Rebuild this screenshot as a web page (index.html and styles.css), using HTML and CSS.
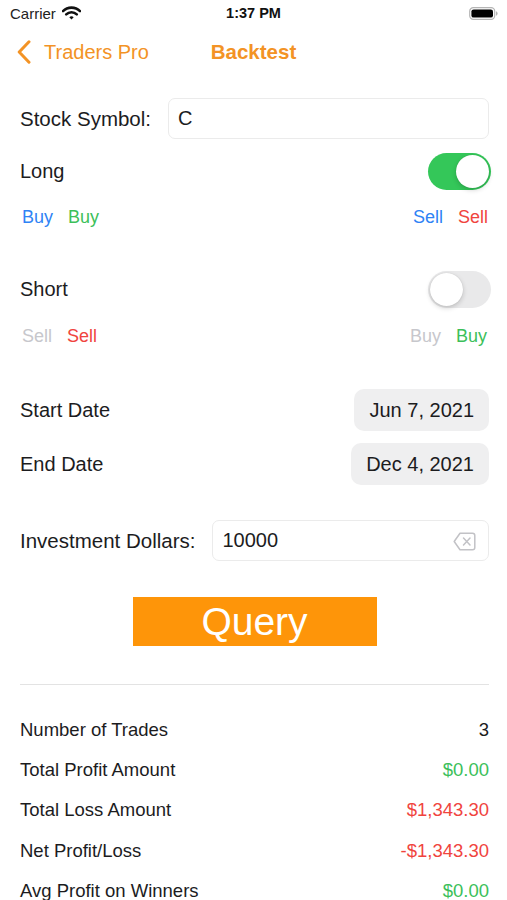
FILE: index.html
```html
<!DOCTYPE html>
<html lang="en">
<head>
    <meta charset="UTF-8">
    <title>Backtest</title>

    <link rel="stylesheet" href="styles.css">
</head>
<body>
<div class="status-bar">
    <div class="status-left">
        <span>Carrier</span>
        <svg class="wifi" width="19" height="14" viewBox="0 0 19 14">
            <path d="M1 5.2 A12 12 0 0 1 18 5.2" fill="none" stroke="#111" stroke-width="2.6" stroke-linecap="round"/>
            <path d="M4.2 8.4 A7.5 7.5 0 0 1 14.8 8.4" fill="none" stroke="#111" stroke-width="2.6" stroke-linecap="round"/>
            <path d="M7.3 11.3 L9.5 13.4 L11.7 11.3 A3.1 3.1 0 0 0 7.3 11.3 Z" fill="#111"/>
        </svg>
    </div>
    <div class="status-time">1:37 PM</div>
    <div class="status-right">
        <svg width="29" height="13" viewBox="0 0 29 13">
            <rect x="0.7" y="0.7" width="25" height="11.6" rx="3.6" fill="none" stroke="#b5b5b5" stroke-width="1.2"/>
            <rect x="2.4" y="2.4" width="21.6" height="8.2" rx="2.2" fill="#000"/>
            <path d="M27 4.3 Q28.6 4.6 28.6 6.5 Q28.6 8.4 27 8.7 Z" fill="#b5b5b5"/>
        </svg>
    </div>
</div>

<header class="nav-bar">
    <a href="#" class="back">
        <svg width="14" height="24" viewBox="0 0 14 24">
            <path d="M12 1.8 L2.2 12 L12 22.2" fill="none" stroke="#f39325" stroke-width="3" stroke-linecap="round" stroke-linejoin="round"/>
        </svg>
        <span>Traders Pro</span>
    </a>
    <h1 class="nav-title">Backtest</h1>
    <div></div>
</header>

<main class="form">
    <div class="field-row symbol-row">
        <label class="field-label">Stock Symbol:</label>
        <div class="text-box">C</div>
    </div>

    <div class="toggle-row long-row">
        <span>Long</span>
        <div class="switch on"><div class="knob"></div></div>
    </div>
    <div class="action-row first-actions">
        <div class="pair">
            <span class="blue">Buy</span>
            <span class="green">Buy</span>
        </div>
        <div class="pair">
            <span class="blue">Sell</span>
            <span class="red">Sell</span>
        </div>
    </div>

    <div class="toggle-row short-row">
        <span>Short</span>
        <div class="switch"><div class="knob"></div></div>
    </div>
    <div class="action-row second-actions">
        <div class="pair">
            <span class="gray">Sell</span>
            <span class="red">Sell</span>
        </div>
        <div class="pair">
            <span class="gray">Buy</span>
            <span class="green">Buy</span>
        </div>
    </div>

    <div class="date-row start-row">
        <span>Start Date</span>
        <div class="date-pill">Jun 7, 2021</div>
    </div>
    <div class="date-row end-row">
        <span>End Date</span>
        <div class="date-pill">Dec 4, 2021</div>
    </div>

    <div class="field-row invest-row">
        <label class="field-label">Investment Dollars:</label>
        <div class="text-box">
            <span>10000</span>
            <svg class="clear" width="23" height="19" viewBox="0 0 23 19">
                <path d="M7 1.2 H19.5 Q21.8 1.2 21.8 3.5 V15.5 Q21.8 17.8 19.5 17.8 H7 L1.2 9.5 Z" fill="none" stroke="#c2c2c6" stroke-width="1.5" stroke-linejoin="round"/>
                <path d="M10.5 6 L17 13 M17 6 L10.5 13" stroke="#c2c2c6" stroke-width="1.5" stroke-linecap="round"/>
            </svg>
        </div>
    </div>

    <button class="query">Query</button>

    <hr class="divider">

    <section class="stats">
        <div class="stat"><span>Number of Trades</span><span>3</span></div>
        <div class="stat"><span>Total Profit Amount</span><span class="green">$0.00</span></div>
        <div class="stat"><span>Total Loss Amount</span><span class="red">$1,343.30</span></div>
        <div class="stat"><span>Net Profit/Loss</span><span class="red">-$1,343.30</span></div>
        <div class="stat"><span>Avg Profit on Winners</span><span class="green">$0.00</span></div>
    </section>
</main>
</body>
</html>
```

FILE: styles.css
```css
body {
    margin: 0;
    width: 507px;
    height: 900px;
    overflow: hidden;
    background-color: white;
    color: #1c1c1e;
    font-family: "Liberation Sans", Arial, sans-serif;
}

/* status bar */

.status-bar {
    height: 26px;
    display: grid;
    grid-template-columns: 1fr auto 1fr;
    align-items: center;
    font-size: 15px;
}

.status-left {
    display: flex;
    align-items: center;
    gap: 6px;
    padding-left: 10px;
    color: #222;
}

.status-time {
    font-weight: bold;
    font-size: 14.5px;
    color: #111;
}

.status-right {
    display: flex;
    justify-content: flex-end;
    padding-right: 9px;
    padding-top: 1px;
}

/* navigation */

.nav-bar {
    height: 52px;
    display: grid;
    grid-template-columns: 1fr auto 1fr;
    align-items: center;
}

.back {
    display: flex;
    align-items: center;
    gap: 13px;
    padding-left: 17px;
    color: #f39325;
    text-decoration: none;
    font-size: 20px;
}

.nav-title {
    margin: 0;
    font-size: 20.5px;
    font-weight: bold;
    color: #f39325;
}

/* form */

.form {
    padding: 0 18px 0 20px;
    font-size: 20px;
}

.field-row {
    display: flex;
    align-items: center;
    height: 41px;
}

.field-label {
    margin-right: 17px;
    white-space: nowrap;
    font-size: 20.5px;
}

.symbol-row {
    margin-top: 20px;
}

.invest-row {
    margin-top: 35px;
}

.text-box {
    flex: 1;
    height: 39px;
    display: flex;
    align-items: center;
    justify-content: space-between;
    padding: 0 12px 0 9px;
    border: 1px solid #ebebeb;
    border-radius: 7px;
}

.clear {
    margin-top: 1px;
}

.toggle-row {
    display: flex;
    align-items: center;
    justify-content: space-between;
    height: 37px;
}

.long-row {
    margin-top: 14px;
}

.short-row {
    margin-top: 42px;
}

.switch {
    width: 63px;
    height: 37px;
    margin-right: -2px;
    border-radius: 19px;
    background-color: #e9e9ea;
    display: flex;
    align-items: center;
    padding: 0 2px;
    box-sizing: border-box;
}

.switch .knob {
    width: 33px;
    height: 33px;
    border-radius: 50%;
    background-color: white;
    box-shadow: 0 2px 5px rgba(0, 0, 0, 0.18), 0 0 1px rgba(0, 0, 0, 0.15);
}

.switch.on {
    background-color: #34c759;
    justify-content: flex-end;
}

.action-row {
    display: flex;
    justify-content: space-between;
    align-items: center;
    height: 24px;
    font-size: 18px;
    padding-left: 2px;
}

.first-actions {
    margin-top: 15px;
}

.second-actions {
    margin-top: 16px;
}

.pair {
    display: flex;
    gap: 15px;
}

.first-actions .pair:last-child {
    margin-right: 1px;
}

.second-actions .pair:last-child {
    margin-right: 2px;
}

.blue {
    color: #2f83f5;
}

.green {
    color: #3cbf5a;
}

.red {
    color: #f0443e;
}

.gray {
    color: #c7c7cc;
}

.date-row {
    display: flex;
    align-items: center;
    justify-content: space-between;
    height: 42px;
}

.start-row {
    margin-top: 41px;
}

.end-row {
    margin-top: 12px;
}

.date-pill {
    height: 42px;
    display: flex;
    align-items: center;
    padding: 0 15px;
    border-radius: 10px;
    background-color: #efeff0;
}

.query {
    display: block;
    width: 244px;
    height: 49px;
    margin: 36px auto 0;
    padding: 0;
    border: none;
    border-radius: 0;
    background-color: #fe9509;
    color: white;
    font-family: "Liberation Sans", Arial, sans-serif;
    font-size: 39px;
}

.divider {
    margin: 38px 0 0;
    border: none;
    border-top: 1px solid #e3e3e3;
}

.stats {
    margin-top: 25px;
    font-size: 18.5px;
    line-height: 1;
}

.stat {
    height: 40.3px;
    display: flex;
    align-items: center;
    justify-content: space-between;
}
```
